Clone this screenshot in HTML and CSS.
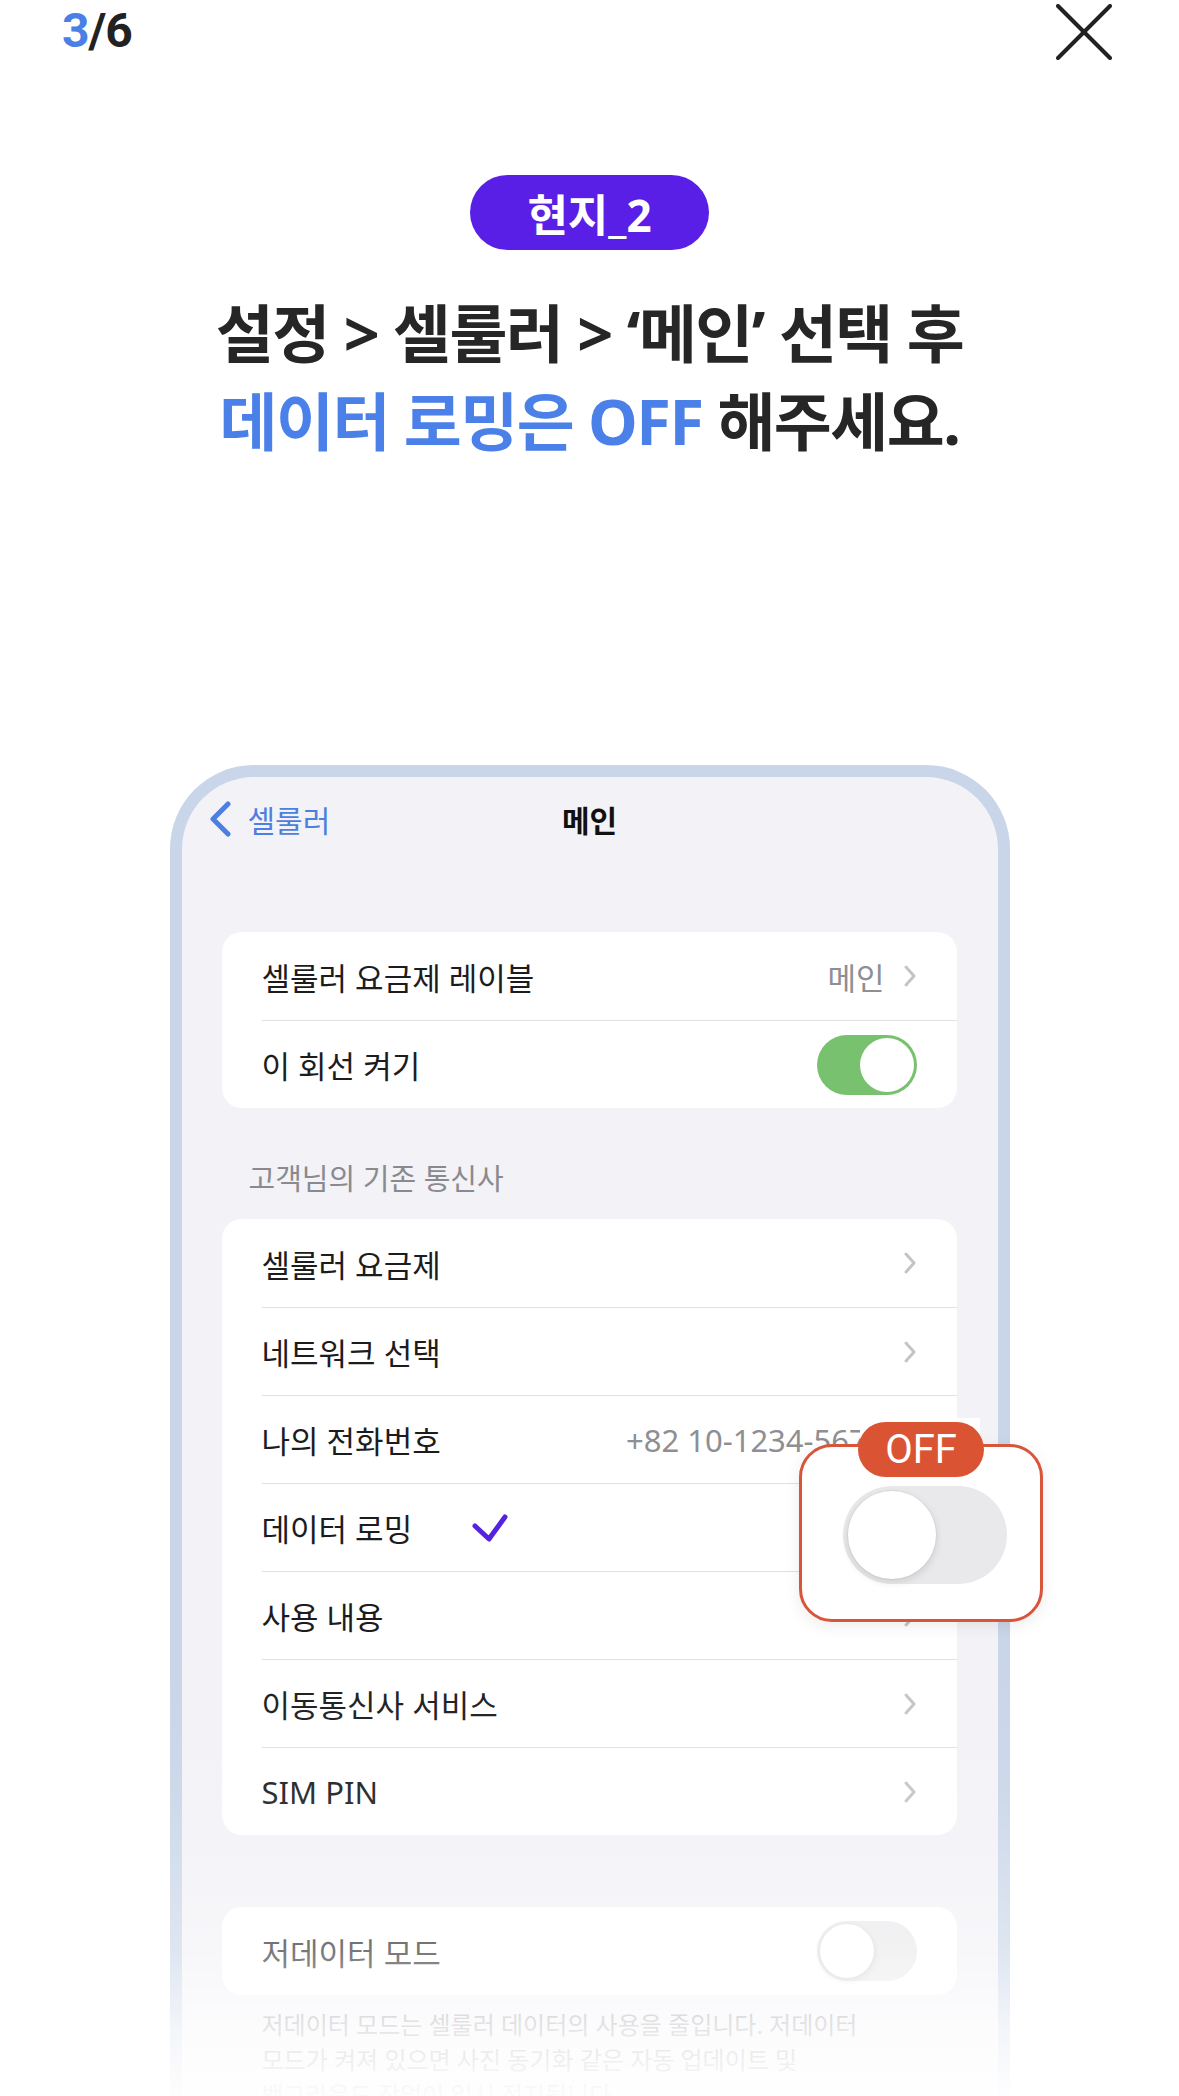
FILE: index.html
```
<!DOCTYPE html>
<html lang="ko">
<head>
    <meta charset="UTF-8">
    <meta name="viewport" content="width=device-width, initial-scale=1.0">
    <title>현지_2 - 데이터 로밍 OFF</title>
    <link rel="stylesheet" href="styles.css">
</head>
<body>
<div class="page">
    <!-- 상단: 진행 단계 + 닫기 -->
    <header class="topbar">
        <div class="counter"><span class="current">3</span>/6</div>
        <button class="close" aria-label="닫기">
            <svg width="56" height="56" viewBox="0 0 56 56">
                <line x1="2" y1="2" x2="54" y2="54" stroke="#222" stroke-width="4" stroke-linecap="round"/>
                <line x1="54" y1="2" x2="2" y2="54" stroke="#222" stroke-width="4" stroke-linecap="round"/>
            </svg>
        </button>
    </header>

    <section class="guide">
        <span class="step">현지_2</span>
        <h1 class="title">설정 &gt; 셀룰러 &gt; ‘메인’ 선택 후<br><em>데이터 로밍은 OFF</em> 해주세요.</h1>
    </section>

    <!-- 아이폰 설정 화면 -->
    <div class="phone">
        <div class="nav">
            <div class="back">
                <svg width="24" height="36" viewBox="0 0 24 36">
                    <path d="M20 3 L5 18 L20 33" fill="none" stroke="#4b7fe0" stroke-width="5" stroke-linecap="round" stroke-linejoin="round"/>
                </svg>
                <span>셀룰러</span>
            </div>
            <div class="nav-title">메인</div>
            <div></div>
        </div>

        <div class="group first">
            <div class="row">
                <div class="row-in">
                    <span class="label">셀룰러 요금제 레이블</span>
                    <span class="trail"><span class="value">메인</span><svg class="chev" width="14" height="24" viewBox="0 0 14 24"><path d="M3 3 L11 12 L3 21" fill="none" stroke="#c4c4c7" stroke-width="3" stroke-linecap="round" stroke-linejoin="round"/></svg></span>
                </div>
            </div>
            <div class="row">
                <div class="row-in">
                    <span class="label">이 회선 켜기</span>
                    <span class="trail"><span class="switch on"><span class="knob"></span></span></span>
                </div>
            </div>
        </div>

        <div class="section-label">고객님의 기존 통신사</div>

        <div class="group">
            <div class="row">
                <div class="row-in">
                    <span class="label">셀룰러 요금제</span>
                    <span class="trail"><svg class="chev" width="14" height="24" viewBox="0 0 14 24"><path d="M3 3 L11 12 L3 21" fill="none" stroke="#c4c4c7" stroke-width="3" stroke-linecap="round" stroke-linejoin="round"/></svg></span>
                </div>
            </div>
            <div class="row">
                <div class="row-in">
                    <span class="label">네트워크 선택</span>
                    <span class="trail"><svg class="chev" width="14" height="24" viewBox="0 0 14 24"><path d="M3 3 L11 12 L3 21" fill="none" stroke="#c4c4c7" stroke-width="3" stroke-linecap="round" stroke-linejoin="round"/></svg></span>
                </div>
            </div>
            <div class="row">
                <div class="row-in">
                    <span class="label">나의 전화번호</span>
                    <span class="trail"><span class="value">+82 10-1234-5678</span><svg class="chev" width="14" height="24" viewBox="0 0 14 24"><path d="M3 3 L11 12 L3 21" fill="none" stroke="#c4c4c7" stroke-width="3" stroke-linecap="round" stroke-linejoin="round"/></svg></span>
                </div>
            </div>
            <div class="row">
                <div class="row-in">
                    <span class="label">데이터 로밍</span>
                    <svg class="check" width="40" height="32" viewBox="0 0 40 32">
                        <path d="M5 14 L19 27 L35 5" fill="none" stroke="#5522e0" stroke-width="5" stroke-linecap="round" stroke-linejoin="round"/>
                    </svg>
                    <span class="trail"><svg class="chev" width="14" height="24" viewBox="0 0 14 24"><path d="M3 3 L11 12 L3 21" fill="none" stroke="#c4c4c7" stroke-width="3" stroke-linecap="round" stroke-linejoin="round"/></svg></span>
                </div>
            </div>
            <div class="row">
                <div class="row-in">
                    <span class="label">사용 내용</span>
                    <span class="trail"><svg class="chev" width="14" height="24" viewBox="0 0 14 24"><path d="M3 3 L11 12 L3 21" fill="none" stroke="#c4c4c7" stroke-width="3" stroke-linecap="round" stroke-linejoin="round"/></svg></span>
                </div>
            </div>
            <div class="row">
                <div class="row-in">
                    <span class="label">이동통신사 서비스</span>
                    <span class="trail"><svg class="chev" width="14" height="24" viewBox="0 0 14 24"><path d="M3 3 L11 12 L3 21" fill="none" stroke="#c4c4c7" stroke-width="3" stroke-linecap="round" stroke-linejoin="round"/></svg></span>
                </div>
            </div>
            <div class="row">
                <div class="row-in">
                    <span class="label">SIM PIN</span>
                    <span class="trail"><svg class="chev" width="14" height="24" viewBox="0 0 14 24"><path d="M3 3 L11 12 L3 21" fill="none" stroke="#c4c4c7" stroke-width="3" stroke-linecap="round" stroke-linejoin="round"/></svg></span>
                </div>
            </div>
        </div>

        <div class="group low">
            <div class="row">
                <div class="row-in">
                    <span class="label">저데이터 모드</span>
                    <span class="trail"><span class="switch"><span class="knob"></span></span></span>
                </div>
            </div>
        </div>
        <p class="note">저데이터 모드는 셀룰러 데이터의 사용을 줄입니다. 저데이터<br>모드가 켜져 있으면 사진 동기화 같은 자동 업데이트 및<br>백그라운드 작업이 일시 정지됩니다.</p>
    </div>

    <!-- 강조 말풍선 -->
    <div class="callout">
        <span class="callout-badge">OFF</span>
        <span class="switch big"><span class="knob"></span></span>
    </div>

    <div class="fade"></div>
</div>
</body>
</html>
```

FILE: styles.css
```
body {
    margin: 0;
    background-color: #fff;
    font-family: "Noto Sans", "Noto Sans CJK KR", sans-serif;
}
.page {
    position: relative;
    width: 1179px;
    height: 2096px;
    overflow: hidden;
    display: flex;
    flex-direction: column;
}

/* 상단 */
.topbar {
    display: flex;
    justify-content: space-between;
    align-items: flex-start;
    height: 70px;
    padding: 0 67px 0 62px;
    flex-shrink: 0;
}
.counter {
    font-family: Roboto, "Noto Sans", sans-serif;
    font-weight: 700;
    font-size: 48px;
    line-height: 56px;
    padding-top: 3px;
    color: #222;
    letter-spacing: -1px;
}
.current {
    color: #4a7fe6;
}
.close {
    border: 0;
    background: none;
    padding: 0;
    margin-top: 4px;
    width: 56px;
    height: 56px;
}

/* 안내 문구 */
.guide {
    display: flex;
    flex-direction: column;
    align-items: center;
    padding-top: 105px;
    flex-shrink: 0;
}
.step {
    display: flex;
    align-items: center;
    height: 75px;
    padding: 0 57px;
    border-radius: 38px;
    background-color: #5a1fe6;
    color: #fff;
    font-size: 44px;
    font-weight: 700;
}
.title {
    margin: 39px 0 0;
    font-size: 63px;
    line-height: 88px;
    font-weight: 700;
    letter-spacing: -1.5px;
    color: #262626;
    text-align: center;
}
.title em {
    font-style: normal;
    color: #4a80e8;
}

/* 폰 프레임 */
.phone {
    width: 840px;
    flex: 1;
    margin: 300px auto 0;
    border: 12px solid #c9d5e8;
    border-bottom: 0;
    border-radius: 84px 84px 0 0;
    background-color: #f2f2f7;
    box-sizing: border-box;
    padding: 0 41px 0 40px;
}
.nav {
    display: grid;
    grid-template-columns: 1fr auto 1fr;
    align-items: center;
    height: 84px;
    margin: 0 -41px 0 -40px;
    padding: 0 26px;
}
.back {
    display: flex;
    align-items: center;
    gap: 16px;
    color: #4b7fe0;
    font-size: 30px;
}
.nav-title {
    font-size: 30px;
    font-weight: 700;
    color: #111;
}

.group {
    background-color: #fff;
    border-radius: 20px;
    overflow: hidden;
}
.group.first {
    margin-top: 71px;
}
.group.low {
    margin-top: 72px;
}
.row {
    display: flex;
    padding-left: 40px;
    font-size: 31px;
    color: #1c1c1e;
}
.row-in {
    flex: 1;
    display: flex;
    align-items: center;
    height: 88px;
    padding-right: 40px;
    border-top: 1.5px solid #e1e1e4;
    box-sizing: border-box;
}
.row:first-child .row-in {
    border-top: 0;
}
.trail {
    margin-left: auto;
    display: flex;
    align-items: center;
    gap: 18px;
}
.value {
    color: #8e8e93;
}
.check {
    margin-left: 58px;
}
.section-label {
    padding: 51px 0 20px 27px;
    font-size: 29px;
    line-height: 40px;
    color: #8a8a8e;
}
.note {
    margin: 0;
    padding: 12px 40px 0;
    font-size: 24px;
    line-height: 35px;
    color: #8a8a8e;
}

/* 토글 스위치 */
.switch {
    display: flex;
    align-items: center;
    width: 100px;
    height: 60px;
    border-radius: 30px;
    background-color: #e9e9eb;
    padding: 3px;
    box-sizing: border-box;
}
.switch .knob {
    width: 54px;
    height: 54px;
    border-radius: 50%;
    background-color: #fff;
    box-shadow: 0 2px 6px rgba(0, 0, 0, 0.15);
}
.switch.on {
    justify-content: flex-end;
    background-color: #78c16e;
}
.switch.on .knob {
    box-shadow: none;
}
.switch.big {
    width: 164px;
    height: 98px;
    border-radius: 49px;
    padding: 5px;
    margin: 4px 0 0 8px;
}
.switch.big .knob {
    width: 88px;
    height: 88px;
    box-shadow: 0 3px 8px rgba(0, 0, 0, 0.12), 0 0 0 1px rgba(0, 0, 0, 0.04);
}

/* 말풍선 */
.callout {
    position: absolute;
    left: 799px;
    top: 1444px;
    width: 244px;
    height: 178px;
    box-sizing: border-box;
    border: 3px solid #d9553a;
    border-radius: 33px;
    background-color: #fff;
    display: flex;
    align-items: center;
    justify-content: center;
    box-shadow: 0 4px 16px rgba(0, 0, 0, 0.08);
}
.callout::before {
    content: '';
    position: absolute;
    left: 58px;
    top: -29px;
    width: 120px;
    height: 26px;
    background-color: #fff;
}
.callout-badge {
    position: absolute;
    left: 56px;
    top: -25px;
    width: 126px;
    height: 55px;
    border-radius: 28px;
    background-color: #da5434;
    color: #fff;
    font-family: Roboto, sans-serif;
    font-size: 40px;
    display: flex;
    align-items: center;
    justify-content: center;
}

/* 하단 페이드 */
.fade {
    position: absolute;
    left: 0;
    right: 0;
    top: 1640px;
    bottom: 0;
    background: linear-gradient(to bottom,
        rgba(255, 255, 255, 0) 0,
        rgba(255, 255, 255, 0.08) 150px,
        rgba(255, 255, 255, 0.4) 310px,
        rgba(255, 255, 255, 0.78) 390px,
        rgba(255, 255, 255, 0.96) 456px);
}
```
